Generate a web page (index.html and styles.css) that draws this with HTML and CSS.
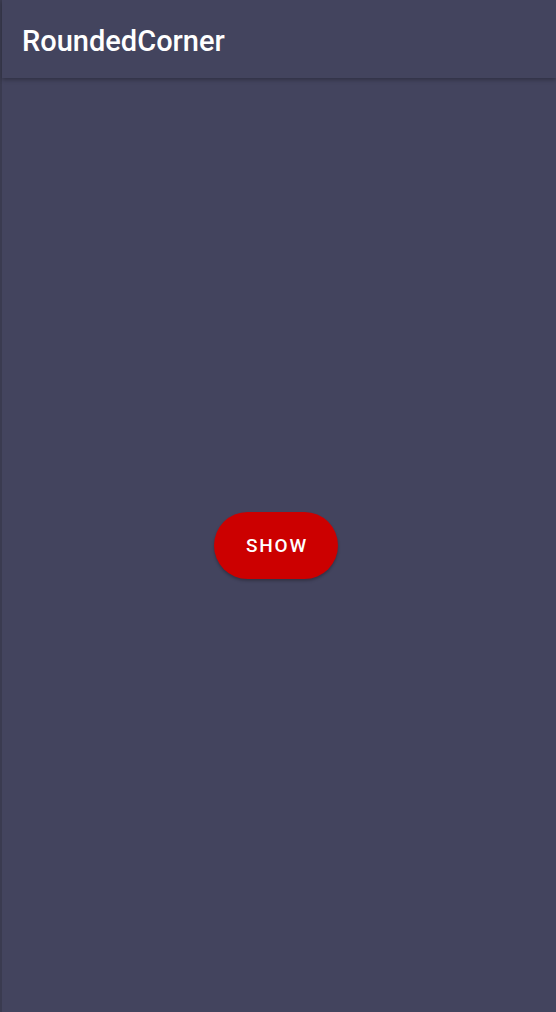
FILE: index.html
```html
<!DOCTYPE html>
<html>
<head>
<meta charset="utf-8">
<link rel="stylesheet" href="styles.css">
</head>
<body>
<div class="app">
  <header class="appbar"><h1 class="title">RoundedCorner</h1></header>
  <main class="content">
    <button class="show-btn">SHOW</button>
  </main>
</div>
</body>
</html>
```
FILE: styles.css
```css
html, body {
  margin: 0;
  padding: 0;
  height: 100%;
  background: #43445e;
  font-family: Roboto, "Noto Sans", sans-serif;
}
.app {
  height: 100%;
  display: flex;
  flex-direction: column;
  border-left: 2px solid #3a3b50;
  box-sizing: border-box;
}
.appbar {
  height: 78px;
  flex: none;
  display: flex;
  align-items: center;
  padding-left: 20px;
  background: #43445e;
  box-shadow: 0 2px 4px rgba(0, 0, 0, 0.28);
  position: relative;
  z-index: 1;
}
.title {
  margin: 0;
  color: #ffffff;
  font-size: 29px;
  font-weight: 500;
  letter-spacing: 0;
  line-height: 1;
  padding-top: 4px;
}
.content {
  flex: 1;
  display: flex;
  align-items: center;
  justify-content: center;
  padding-right: 6px;
}
.show-btn {
  width: 124px;
  height: 67px;
  border: none;
  border-radius: 34px;
  background: #cc0000;
  color: #ffffff;
  font-family: Roboto, "Noto Sans", sans-serif;
  font-size: 19px;
  font-weight: 500;
  letter-spacing: 1.8px;
  box-shadow: 0 2px 3px rgba(0, 0, 0, 0.25);
  padding: 0 0 0 2px;
}
```
